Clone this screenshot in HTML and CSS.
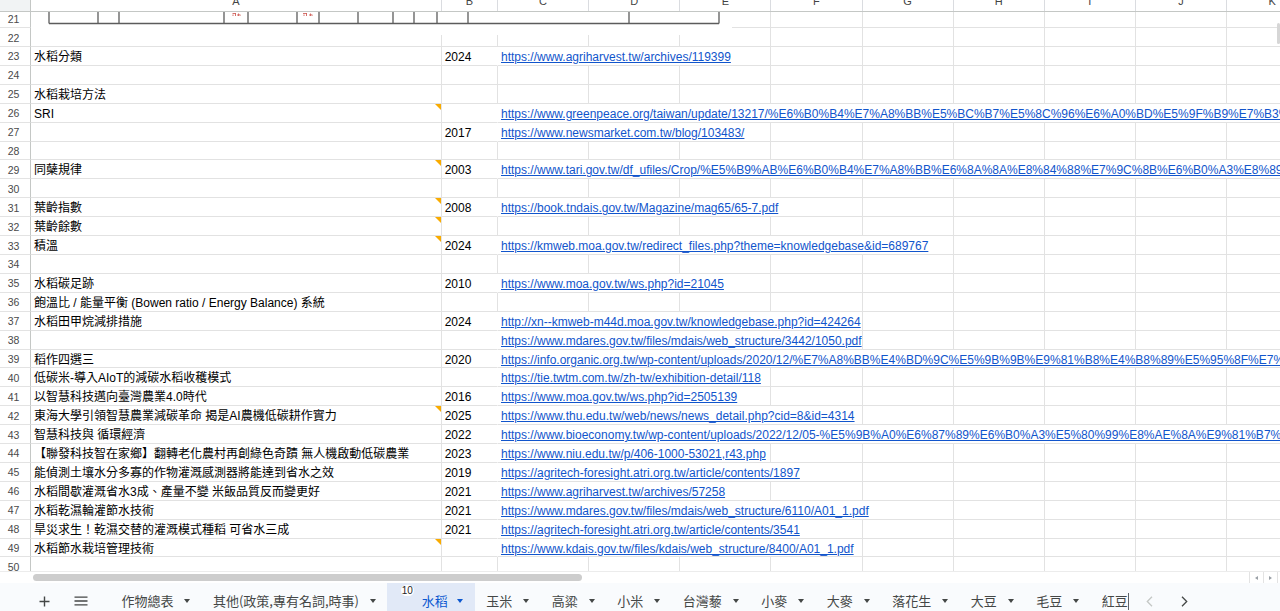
FILE: index.html
```html
<!DOCTYPE html>
<html lang="zh-Hant">
<head>
<meta charset="utf-8">
<title>水稻</title>
<link rel="stylesheet" href="styles.css">
</head>
<body>
<div class="app">
  <div class="sheet">
    <div class="grid colhead">
      <div class="corner"></div>
      <div class="ch">A</div><div class="ch">B</div><div class="ch">C</div><div class="ch">D</div><div class="ch">E</div><div class="ch">F</div><div class="ch">G</div><div class="ch">H</div><div class="ch">I</div><div class="ch">J</div><div class="ch">K</div><div class="ch">L</div>
    </div>

    <div class="grid row r21"><div class="rn">21</div><div class="c"></div><div class="c"></div><div class="c"></div><div class="c"></div><div class="c"></div><div class="c"></div><div class="c"></div><div class="c"></div><div class="c"></div><div class="c"></div><div class="c"></div><div class="c"></div></div>
    <div class="grid row r22"><div class="rn">22</div><div class="c"></div><div class="c"></div><div class="c"></div><div class="c"></div><div class="c"></div><div class="c"></div><div class="c"></div><div class="c"></div><div class="c"></div><div class="c"></div><div class="c"></div><div class="c"></div></div>

    <div class="grid row"><div class="rn">23</div><div class="c">水稻分類</div><div class="c nb">2024</div><div class="c s3"><a href="#">https://www.agriharvest.tw/archives/119399</a></div><div class="c"></div><div class="c"></div><div class="c"></div><div class="c"></div><div class="c"></div><div class="c"></div><div class="c"></div></div>
    <div class="grid row"><div class="rn">24</div><div class="c"></div><div class="c"></div><div class="c"></div><div class="c"></div><div class="c"></div><div class="c"></div><div class="c"></div><div class="c"></div><div class="c"></div><div class="c"></div><div class="c"></div><div class="c"></div></div>
    <div class="grid row"><div class="rn">25</div><div class="c">水稻栽培方法</div><div class="c"></div><div class="c"></div><div class="c"></div><div class="c"></div><div class="c"></div><div class="c"></div><div class="c"></div><div class="c"></div><div class="c"></div><div class="c"></div><div class="c"></div></div>
    <div class="grid row"><div class="rn">26</div><div class="c note">SRI</div><div class="c nb"></div><div class="c sw"><a href="#">https://www.greenpeace.org/taiwan/update/13217/%E6%B0%B4%E7%A8%BB%E5%BC%B7%E5%8C%96%E6%A0%BD%E5%9F%B9%E7%B3%BB%E7%B5%B1sri/</a></div></div>
    <div class="grid row"><div class="rn">27</div><div class="c"></div><div class="c nb">2017</div><div class="c s3"><a href="#">https://www.newsmarket.com.tw/blog/103483/</a></div><div class="c"></div><div class="c"></div><div class="c"></div><div class="c"></div><div class="c"></div><div class="c"></div><div class="c"></div></div>
    <div class="grid row"><div class="rn">28</div><div class="c"></div><div class="c"></div><div class="c"></div><div class="c"></div><div class="c"></div><div class="c"></div><div class="c"></div><div class="c"></div><div class="c"></div><div class="c"></div><div class="c"></div><div class="c"></div></div>
    <div class="grid row"><div class="rn">29</div><div class="c note">同蘖規律</div><div class="c nb">2003</div><div class="c sw"><a href="#">https://www.tari.gov.tw/df_ufiles/Crop/%E5%B9%AB%E6%B0%B4%E7%A8%BB%E6%8A%8A%E8%84%88%E7%9C%8B%E6%B0%A3%E8%89%B2.pdf</a></div></div>
    <div class="grid row"><div class="rn">30</div><div class="c"></div><div class="c"></div><div class="c"></div><div class="c"></div><div class="c"></div><div class="c"></div><div class="c"></div><div class="c"></div><div class="c"></div><div class="c"></div><div class="c"></div><div class="c"></div></div>
    <div class="grid row"><div class="rn">31</div><div class="c note">葉齡指數</div><div class="c nb">2008</div><div class="c s4"><a href="#">https://book.tndais.gov.tw/Magazine/mag65/65-7.pdf</a></div><div class="c"></div><div class="c"></div><div class="c"></div><div class="c"></div><div class="c"></div><div class="c"></div></div>
    <div class="grid row"><div class="rn">32</div><div class="c note">葉齡餘數</div><div class="c"></div><div class="c"></div><div class="c"></div><div class="c"></div><div class="c"></div><div class="c"></div><div class="c"></div><div class="c"></div><div class="c"></div><div class="c"></div><div class="c"></div></div>
    <div class="grid row"><div class="rn">33</div><div class="c note">積溫</div><div class="c nb">2024</div><div class="c s5"><a href="#">https://kmweb.moa.gov.tw/redirect_files.php?theme=knowledgebase&amp;id=689767</a></div><div class="c"></div><div class="c"></div><div class="c"></div><div class="c"></div><div class="c"></div></div>
    <div class="grid row"><div class="rn">34</div><div class="c"></div><div class="c"></div><div class="c"></div><div class="c"></div><div class="c"></div><div class="c"></div><div class="c"></div><div class="c"></div><div class="c"></div><div class="c"></div><div class="c"></div><div class="c"></div></div>
    <div class="grid row"><div class="rn">35</div><div class="c">水稻碳足跡</div><div class="c nb">2010</div><div class="c s3"><a href="#">https://www.moa.gov.tw/ws.php?id=21045</a></div><div class="c"></div><div class="c"></div><div class="c"></div><div class="c"></div><div class="c"></div><div class="c"></div><div class="c"></div></div>
    <div class="grid row"><div class="rn">36</div><div class="c">飽溫比 / 能量平衡 (Bowen ratio / Energy Balance) 系統</div><div class="c"></div><div class="c"></div><div class="c"></div><div class="c"></div><div class="c"></div><div class="c"></div><div class="c"></div><div class="c"></div><div class="c"></div><div class="c"></div><div class="c"></div></div>
    <div class="grid row"><div class="rn">37</div><div class="c">水稻田甲烷減排措施</div><div class="c nb">2024</div><div class="c s4"><a href="#">http://xn--kmweb-m44d.moa.gov.tw/knowledgebase.php?id=424264</a></div><div class="c"></div><div class="c"></div><div class="c"></div><div class="c"></div><div class="c"></div><div class="c"></div></div>
    <div class="grid row"><div class="rn">38</div><div class="c"></div><div class="c nb"></div><div class="c s4"><a href="#">https://www.mdares.gov.tw/files/mdais/web_structure/3442/1050.pdf</a></div><div class="c"></div><div class="c"></div><div class="c"></div><div class="c"></div><div class="c"></div><div class="c"></div></div>
    <div class="grid row"><div class="rn">39</div><div class="c">稻作四選三</div><div class="c nb">2020</div><div class="c sw"><a href="#">https://info.organic.org.tw/wp-content/uploads/2020/12/%E7%A8%BB%E4%BD%9C%E5%9B%9B%E9%81%B8%E4%B8%89%E5%95%8F%E7%AD%94.pdf</a></div></div>
    <div class="grid row"><div class="rn">40</div><div class="c">低碳米-導入AIoT的減碳水稻收穫模式</div><div class="c nb"></div><div class="c s3"><a href="#">https://tie.twtm.com.tw/zh-tw/exhibition-detail/118</a></div><div class="c"></div><div class="c"></div><div class="c"></div><div class="c"></div><div class="c"></div><div class="c"></div><div class="c"></div></div>
    <div class="grid row"><div class="rn">41</div><div class="c">以智慧科技邁向臺灣農業4.0時代</div><div class="c nb">2016</div><div class="c s3"><a href="#">https://www.moa.gov.tw/ws.php?id=2505139</a></div><div class="c"></div><div class="c"></div><div class="c"></div><div class="c"></div><div class="c"></div><div class="c"></div><div class="c"></div></div>
    <div class="grid row"><div class="rn">42</div><div class="c note">東海大學引領智慧農業減碳革命 揭是AI農機低碳耕作實力</div><div class="c nb">2025</div><div class="c s4"><a href="#">https://www.thu.edu.tw/web/news/news_detail.php?cid=8&amp;id=4314</a></div><div class="c"></div><div class="c"></div><div class="c"></div><div class="c"></div><div class="c"></div><div class="c"></div></div>
    <div class="grid row"><div class="rn">43</div><div class="c">智慧科技與 循環經濟</div><div class="c nb">2022</div><div class="c sw"><a href="#">https://www.bioeconomy.tw/wp-content/uploads/2022/12/05-%E5%9B%A0%E6%87%89%E6%B0%A3%E5%80%99%E8%AE%8A%E9%81%B7%E7%9A%84.pdf</a></div></div>
    <div class="grid row"><div class="rn">44</div><div class="c">【聯發科技智在家鄉】翻轉老化農村再創綠色奇蹟 無人機啟動低碳農業</div><div class="c nb">2023</div><div class="c s3"><a href="#">https://www.niu.edu.tw/p/406-1000-53021,r43.php</a></div><div class="c"></div><div class="c"></div><div class="c"></div><div class="c"></div><div class="c"></div><div class="c"></div><div class="c"></div></div>
    <div class="grid row"><div class="rn">45</div><div class="c">能偵測土壤水分多寡的作物灌溉感測器將能達到省水之效</div><div class="c nb">2019</div><div class="c s4"><a href="#">https://agritech-foresight.atri.org.tw/article/contents/1897</a></div><div class="c"></div><div class="c"></div><div class="c"></div><div class="c"></div><div class="c"></div><div class="c"></div></div>
    <div class="grid row"><div class="rn">46</div><div class="c">水稻間歇灌溉省水3成、產量不變 米飯品質反而變更好</div><div class="c nb">2021</div><div class="c s3"><a href="#">https://www.agriharvest.tw/archives/57258</a></div><div class="c"></div><div class="c"></div><div class="c"></div><div class="c"></div><div class="c"></div><div class="c"></div><div class="c"></div></div>
    <div class="grid row"><div class="rn">47</div><div class="c">水稻乾濕輪灌節水技術</div><div class="c nb">2021</div><div class="c s5"><a href="#">https://www.mdares.gov.tw/files/mdais/web_structure/6110/A01_1.pdf</a></div><div class="c"></div><div class="c"></div><div class="c"></div><div class="c"></div><div class="c"></div></div>
    <div class="grid row"><div class="rn">48</div><div class="c">旱災求生！乾濕交替的灌溉模式種稻 可省水三成</div><div class="c nb">2021</div><div class="c s4"><a href="#">https://agritech-foresight.atri.org.tw/article/contents/3541</a></div><div class="c"></div><div class="c"></div><div class="c"></div><div class="c"></div><div class="c"></div><div class="c"></div></div>
    <div class="grid row"><div class="rn">49</div><div class="c note">水稻節水栽培管理技術</div><div class="c nb"></div><div class="c s4"><a href="#">https://www.kdais.gov.tw/files/kdais/web_structure/8400/A01_1.pdf</a></div><div class="c"></div><div class="c"></div><div class="c"></div><div class="c"></div><div class="c"></div><div class="c"></div></div>
    <div class="grid row"><div class="rn">50</div><div class="c"></div><div class="c"></div><div class="c"></div><div class="c"></div><div class="c"></div><div class="c"></div><div class="c"></div><div class="c"></div><div class="c"></div><div class="c"></div><div class="c"></div><div class="c"></div></div>

    <!-- embedded table picture floating over rows 21-22 -->
    <div class="drawing">
      <svg width="701" height="23" viewBox="0 0 701 23">
        <rect x="0" y="0" width="701" height="23" fill="#fff"/>
        <g stroke="#5c5c5c" stroke-width="1.3" fill="none">
          <path d="M18 0V11.5M67 0V11.5M88 0V11.5M193 0V11.5M217 0V11.5M266 0V11.5M288 0V11.5M327 0V11.5M362 0V11.5M383 0V11.5M406 0V11.5M437 0V11.5M598 0V11.5M688 0V11.5"/>
          <path d="M18 11.5H688"/>
        </g>
        <g stroke="#d0605a" stroke-width="0.9" fill="none">
          <path d="M201.5 1.5h3.5M202 2.5v1.5M204.5 1v3M206 3h3M207.5 1.5v2.5M209 2.5l0.5 1"/>
          <path d="M272 1.5h4M273 2.5v1.5M275.5 1v3M278 3h3M279.5 1.5v2.5M281 2.5l0.5 1"/>
        </g>
      </svg>
    </div>

    <div class="vscroll"><div class="vthumb"></div></div>
  </div>

  <div class="hscroll">
    <div class="hs-gutter"></div>
    <div class="hs-track"><div class="hs-thumb"></div></div>
    <div class="hs-btn"><span class="tri-l"></span></div>
    <div class="hs-btn"><span class="tri-r"></span></div>
    <div class="hs-end"></div>
  </div>

  <div class="tabbar">
    <div class="tb-btn tb-add">
      <svg width="11" height="11" viewBox="0 0 11 11"><path d="M5.5 0.5v10M0.5 5.5h10" stroke="#444746" stroke-width="1.4" fill="none"/></svg>
    </div>
    <div class="tb-btn tb-list">
      <svg width="14" height="10" viewBox="0 0 14 10"><path d="M0.5 1.2h13M0.5 5h13M0.5 8.8h13" stroke="#444746" stroke-width="1.3" fill="none"/></svg>
    </div>
    <div class="tabs">
      <div class="tab">作物總表<span class="caret"></span></div>
      <div class="tab">其他(政策,專有名詞,時事)<span class="caret"></span></div>
      <div class="tab active"><span class="badge">10</span>水稻<span class="caret"></span></div>
      <div class="tab">玉米<span class="caret"></span></div>
      <div class="tab">高粱<span class="caret"></span></div>
      <div class="tab">小米<span class="caret"></span></div>
      <div class="tab">台灣藜<span class="caret"></span></div>
      <div class="tab">小麥<span class="caret"></span></div>
      <div class="tab">大麥<span class="caret"></span></div>
      <div class="tab">落花生<span class="caret"></span></div>
      <div class="tab">大豆<span class="caret"></span></div>
      <div class="tab">毛豆<span class="caret"></span></div>
      <div class="tab">紅豆<span class="caret"></span></div>
    </div>
    <div class="tabs-edge"></div>
    <div class="nav nav-prev">
      <svg width="7" height="11" viewBox="0 0 7 11"><path d="M6 0.8L1.3 5.5L6 10.2" stroke="#c4c7c5" stroke-width="1.3" fill="none"/></svg>
    </div>
    <div class="nav nav-next">
      <svg width="7" height="11" viewBox="0 0 7 11"><path d="M1 0.8L5.7 5.5L1 10.2" stroke="#444746" stroke-width="1.3" fill="none"/></svg>
    </div>
  </div>
</div>
</body>
</html>
```

FILE: styles.css
```css
* {
  box-sizing: border-box;
}

html,
body {
  margin: 0;
  height: 611px;
  overflow: hidden;
  background: #fff;
}

body {
  font-family: "Liberation Sans", "Noto Sans CJK TC", Arial, sans-serif;
  color: #000;
}

.app {
  width: 1280px;
}

/* ---------- grid ---------- */
.sheet {
  position: relative;
  height: 571px;
  overflow: hidden;
}

.grid {
  display: grid;
  grid-template-columns: 31px 410.7px 56.3px repeat(10, 91.15px);
}

.colhead {
  position: relative;
  z-index: 2;
  height: 21px;
  margin-top: -9px;
  background: #fff;
  border-bottom: 1px solid #c4c7c5;
}

.colhead .corner {
  background: #f1f3f4;
  border-right: 1px solid #c4c7c5;
}

.colhead .ch {
  border-right: 1px solid #dadce0;
  font-size: 11px;
  line-height: 20px;
  text-align: center;
  color: #444;
}

.row {
  height: 18.92px;
}

.row.r21 {
  height: 19px;
  margin-top: -3px;
}

.row.r22 {
  height: 19px;
}

.rn {
  display: flex;
  align-items: center;
  justify-content: center;
  padding: 1px 3px 0 0;
  border-right: 1px solid #c4c7c5;
  border-bottom: 1px solid #e3e3e3;
  font-size: 10.5px;
  color: #4a4a4a;
}

.c {
  position: relative;
  overflow: hidden;
  white-space: nowrap;
  padding: 2px 3px 0;
  border-right: 1px solid #e2e2e2;
  border-bottom: 1px solid #e2e2e2;
  font-size: 12px;
  line-height: 17px;
}

.c.nb {
  border-right-color: transparent;
}

.c.s3 { grid-column: span 3; }
.c.s4 { grid-column: span 4; }
.c.s5 { grid-column: span 5; }
.c.sw { grid-column: span 10; }

.c a {
  color: #1155cc;
  text-decoration: underline;
}

/* comment marker in the top-right corner */
.c.note::after {
  content: "";
  position: absolute;
  top: 0;
  right: 0;
  border-top: 6px solid #f9ab00;
  border-left: 6px solid transparent;
}

.drawing {
  position: absolute;
  z-index: 1;
  left: 31px;
  top: 12px;
  width: 701px;
  height: 23px;
}

.drawing svg {
  display: block;
}

.vscroll {
  position: absolute;
  z-index: 3;
  top: 12px;
  right: 0;
  bottom: 0;
  width: 3px;
}

.vthumb {
  margin-top: 11px;
  height: 21px;
  border-radius: 2px;
  background: #d6d6d6;
}

/* ---------- horizontal scrollbar ---------- */
.hscroll {
  display: flex;
  height: 12px;
  background: #fff;
  border-top: 1px solid #ececec;
}

.hs-gutter {
  width: 31px;
}

.hs-track {
  width: 1218px;
  padding: 2px 0 0 2px;
}

.hs-thumb {
  width: 549px;
  height: 7px;
  border-radius: 4px;
  background: #cdcdcd;
}

.hs-btn {
  display: flex;
  align-items: center;
  justify-content: center;
  width: 14px;
  border-left: 1px solid #e3e3e3;
}

.tri-l {
  border-right: 3px solid #9aa0a6;
  border-top: 2.5px solid transparent;
  border-bottom: 2.5px solid transparent;
}

.tri-r {
  border-left: 3px solid #9aa0a6;
  border-top: 2.5px solid transparent;
  border-bottom: 2.5px solid transparent;
}

.hs-end {
  width: 3px;
  border-left: 1px solid #e3e3e3;
}

/* ---------- sheet tabs ---------- */
.tabbar {
  display: flex;
  align-items: flex-start;
  height: 28px;
  overflow: hidden;
  background: #f9fbfd;
  font-family: "Noto Sans CJK TC", "Liberation Sans", sans-serif;
  font-size: 13px;
  line-height: 18px;
  color: #444746;
}

.tb-btn {
  display: flex;
  align-items: center;
  justify-content: center;
  width: 24px;
  height: 36px;
}

.tb-add {
  margin-left: 32px;
}

.tb-list {
  margin-left: 12.5px;
}

.tb-btn svg,
.nav svg {
  display: block;
}

.tabs {
  display: flex;
  width: 1018px;
  margin-left: 17.7px;
  overflow: hidden;
  flex-shrink: 0;
}

.tab {
  display: flex;
  align-items: center;
  flex-shrink: 0;
  height: 36px;
  padding: 0 11.25px;
  white-space: nowrap;
}

.caret {
  margin-left: 11px;
  border-top: 4px solid #444746;
  border-left: 3px solid transparent;
  border-right: 3px solid transparent;
}

.tab.active {
  padding: 0 12px 0 13.5px;
  background: #e1e9f7;
  color: #0b57d0;
}

.tab.active .caret {
  margin-left: 9px;
  border-top-color: #0b57d0;
}

.badge {
  align-self: flex-start;
  margin: 2px 8px 0 0;
  padding: 0 1px;
  border-radius: 6px;
  background: #fff;
  font-family: "Liberation Sans", sans-serif;
  font-size: 10px;
  line-height: 11px;
  color: #1f1f1f;
}

.tabs-edge {
  flex-shrink: 0;
  width: 1px;
  height: 17px;
  margin-top: 10px;
  background: #5f6368;
}

.nav {
  display: flex;
  align-items: center;
  justify-content: center;
  flex-shrink: 0;
  width: 24px;
  height: 36px;
}

.nav-prev {
  margin-left: 8.5px;
}

.nav-next {
  margin-left: 11px;
}
```
